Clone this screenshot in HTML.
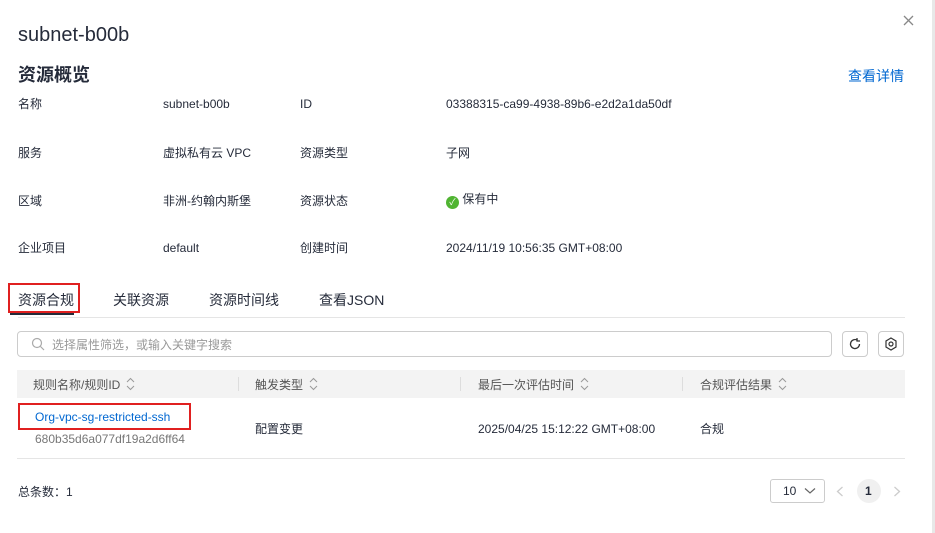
<html><head><style>
body{margin:0;width:935px;height:533px;background:#fff;font-family:"Liberation Sans","Noto Sans CJK SC",sans-serif;color:#252b3a;position:relative;overflow:hidden}
.a{position:absolute;white-space:nowrap}
.s{font-size:12px}
.sort{display:inline-block;margin-left:6px;vertical-align:-2px}
</style></head><body>
<div class="a" style="left:932px;top:0;width:3px;height:533px;background:#e8e8e8"></div>
<svg class="a" style="left:903px;top:15px" width="11" height="11"><path d="M1 1L10 10M10 1L1 10" stroke="#888" stroke-width="1.3"/></svg>
<div class="a" style="left:18px;top:24px;font-size:20px">subnet-b00b</div>
<div class="a" style="left:18px;top:61px;font-size:18px;font-weight:bold">资源概览</div>
<div class="a" style="left:848px;top:66px;font-size:14px;color:#0067d1">查看详情</div>
<div class="a s" style="left:18px;top:95px">名称</div><div class="a s" style="left:163px;top:97px">subnet-b00b</div><div class="a s" style="left:300px;top:97px">ID</div><div class="a s" style="left:446px;top:97px">03388315-ca99-4938-89b6-e2d2a1da50df</div>
<div class="a s" style="left:18px;top:144px">服务</div><div class="a s" style="left:163px;top:144px">虚拟私有云 VPC</div><div class="a s" style="left:300px;top:144px">资源类型</div><div class="a s" style="left:446px;top:144px">子网</div>
<div class="a s" style="left:18px;top:192px">区域</div><div class="a s" style="left:163px;top:192px">非洲-约翰内斯堡</div><div class="a s" style="left:300px;top:192px">资源状态</div>
<div class="a s" style="left:446px;top:190px"><span style="display:inline-block;width:13px;height:13px;border-radius:50%;background:#50b432;color:#fff;font-size:9px;text-align:center;line-height:13px;vertical-align:-2px">✓</span> 保有中</div>
<div class="a s" style="left:18px;top:239px">企业项目</div><div class="a s" style="left:163px;top:241px">default</div><div class="a s" style="left:300px;top:239px">创建时间</div><div class="a s" style="left:446px;top:241px">2024/11/19 10:56:35 GMT+08:00</div>
<div class="a" style="left:18px;top:317px;width:887px;height:1px;background:#e5e5e5"></div>
<div class="a" style="left:10px;top:313px;width:64px;height:2px;background:#252b3a"></div>
<div class="a" style="left:8px;top:283px;width:72px;height:30px;border:2px solid #e02020;box-sizing:border-box"></div>
<div class="a" style="left:18px;top:290px;font-size:14px">资源合规</div>
<div class="a" style="left:113px;top:290px;font-size:14px">关联资源</div>
<div class="a" style="left:209px;top:290px;font-size:14px">资源时间线</div>
<div class="a" style="left:319px;top:290px;font-size:14px">查看JSON</div>
<div class="a" style="left:17px;top:331px;width:815px;height:26px;border:1px solid #ccc;border-radius:4px;box-sizing:border-box"></div>
<svg class="a" style="left:31px;top:337px" width="14" height="14"><circle cx="6" cy="6" r="4.5" fill="none" stroke="#aaa" stroke-width="1.2"/><line x1="9.5" y1="9.5" x2="13" y2="13" stroke="#aaa" stroke-width="1.2"/></svg>
<div class="a s" style="left:52px;top:336px;color:#999">选择属性筛选，或输入关键字搜索</div>
<div class="a" style="left:842px;top:331px;width:26px;height:26px;border:1px solid #ccc;border-radius:4px;box-sizing:border-box"></div>
<svg class="a" style="left:848px;top:337px" width="14" height="14"><path d="M11.5 7A4.5 4.5 0 1 1 9.5 3.3" fill="none" stroke="#333" stroke-width="1.3"/><path d="M9 1v3h3" fill="none" stroke="#333" stroke-width="1.3"/></svg>
<div class="a" style="left:878px;top:331px;width:26px;height:26px;border:1px solid #ccc;border-radius:4px;box-sizing:border-box"></div>
<svg class="a" style="left:884px;top:337px" width="14" height="14"><path d="M7 1L12 4V10L7 13L2 10V4Z" fill="none" stroke="#333" stroke-width="1.2"/><circle cx="7" cy="7" r="2" fill="none" stroke="#333" stroke-width="1.2"/></svg>
<div class="a" style="left:17px;top:370px;width:888px;height:28px;background:#f3f3f3"></div>
<div class="a" style="left:238px;top:377px;width:1px;height:14px;background:#ddd"></div>
<div class="a" style="left:460px;top:377px;width:1px;height:14px;background:#ddd"></div>
<div class="a" style="left:682px;top:377px;width:1px;height:14px;background:#ddd"></div>
<div class="a s" style="left:33px;top:376px;color:#555">规则名称/规则ID<svg class="sort" width="9" height="14"><path d="M1 5L4.5 1.5L8 5M1 9L4.5 12.5L8 9" fill="none" stroke="#999" stroke-width="1"/></svg></div>
<div class="a s" style="left:255px;top:376px;color:#555">触发类型<svg class="sort" width="9" height="14"><path d="M1 5L4.5 1.5L8 5M1 9L4.5 12.5L8 9" fill="none" stroke="#999" stroke-width="1"/></svg></div>
<div class="a s" style="left:478px;top:376px;color:#555">最后一次评估时间<svg class="sort" width="9" height="14"><path d="M1 5L4.5 1.5L8 5M1 9L4.5 12.5L8 9" fill="none" stroke="#999" stroke-width="1"/></svg></div>
<div class="a s" style="left:700px;top:376px;color:#555">合规评估结果<svg class="sort" width="9" height="14"><path d="M1 5L4.5 1.5L8 5M1 9L4.5 12.5L8 9" fill="none" stroke="#999" stroke-width="1"/></svg></div>
<div class="a" style="left:17px;top:458px;width:888px;height:1px;background:#e5e5e5"></div>
<div class="a" style="left:18px;top:403px;width:173px;height:27px;border:2px solid #e02020;box-sizing:border-box"></div>
<div class="a s" style="left:35px;top:410px;color:#0067d1">Org-vpc-sg-restricted-ssh</div>
<div class="a s" style="left:35px;top:432px;color:#777">680b35d6a077df19a2d6ff64</div>
<div class="a s" style="left:255px;top:420px">配置变更</div>
<div class="a s" style="left:478px;top:422px">2025/04/25 15:12:22 GMT+08:00</div>
<div class="a s" style="left:700px;top:420px">合规</div>
<div class="a s" style="left:18px;top:483px">总条数：1</div>
<div class="a" style="left:770px;top:479px;width:55px;height:24px;border:1px solid #ccc;border-radius:3px;box-sizing:border-box"></div>
<div class="a s" style="left:783px;top:484px">10</div>
<svg class="a" style="left:804px;top:487px" width="12" height="8"><path d="M1 1.5L6 6L11 1.5" fill="none" stroke="#666" stroke-width="1.2"/></svg>
<svg class="a" style="left:836px;top:486px" width="8" height="11"><path d="M6.5 1L1.5 5.5L6.5 10" fill="none" stroke="#ccc" stroke-width="1.3"/></svg>
<div class="a" style="left:857px;top:479px;width:24px;height:24px;border-radius:50%;background:#f0f0f0"></div>
<div class="a s" style="left:865px;top:484px;font-weight:bold">1</div>
<svg class="a" style="left:893px;top:486px" width="8" height="11"><path d="M1.5 1L6.5 5.5L1.5 10" fill="none" stroke="#ccc" stroke-width="1.3"/></svg>
</body></html>
